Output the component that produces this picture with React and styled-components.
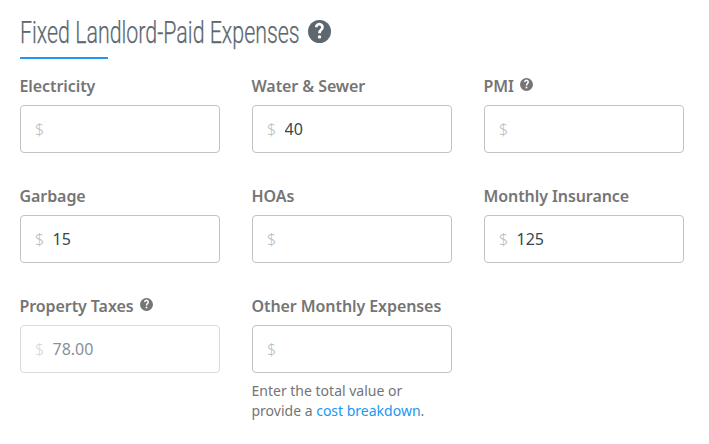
import React, { useState } from 'react';
import styled, { createGlobalStyle } from 'styled-components';

const GlobalStyle = createGlobalStyle`
  * {
    box-sizing: border-box;
  }
  body {
    margin: 0;
    background: #fff;
    font-family: 'Noto Sans', 'Open Sans', sans-serif;
    overflow: hidden;
  }
`;

const Section = styled.section`
  width: 709px;
  height: 444px;
  padding: 9px 20px 0;
`;

const Header = styled.header`
  display: flex;
  align-items: center;
  height: 48px;
  color: #5c6770;

  svg {
    flex: none;
    margin-bottom: 3px;
  }
`;

const TitleBox = styled.div`
  width: 288px;
`;

const Title = styled.h1`
  width: 279px;
  margin: 0 0 2px;
  font-family: Roboto, sans-serif;
  font-size: 32px;
  font-weight: 300;
  line-height: 46px;
  white-space: nowrap;
  transform: scaleX(0.668);
  transform-origin: left center;
  -webkit-text-stroke: 0.25px currentColor;
`;

const Underline = styled.div`
  width: 88px;
  height: 2px;
  background: #2196f3;
`;

const FieldGrid = styled.div`
  display: grid;
  grid-template-columns: repeat(3, 200px);
  column-gap: 32px;
  grid-auto-rows: 110px;
  margin-top: 15px;
`;

const Field = styled.div`
  display: flex;
  flex-direction: column;
`;

const Label = styled.label`
  display: flex;
  flex: none;
  align-items: center;
  gap: 6px;
  height: 24px;
  margin: 0 0 7px -0.5px;
  color: #757575;
  font-size: 16px;
  font-weight: 600;
  letter-spacing: -0.08px;
  white-space: nowrap;

  svg {
    margin-bottom: 3px;
  }
`;

const InputBox = styled.div`
  display: flex;
  align-items: center;
  flex: none;
  height: 48px;
  padding: 0 15px 0 14px;
  border: 1px solid #c0c4c7;
  border-radius: 4px;
  background: #fff;
  opacity: ${({ $disabled }) => ($disabled ? 0.6 : 1)};
`;

const Prefix = styled.span`
  width: 17.5px;
  color: #b8bcbf;
  font-size: 16px;
  font-weight: 300;
`;

const Input = styled.input`
  flex: 1;
  min-width: 0;
  padding: 0;
  border: none;
  outline: none;
  background: transparent;
  color: #37474f;
  font-family: inherit;
  font-size: 16px;
`;

const Hint = styled.p`
  margin: 8px 0 0 -0.5px;
  color: #757575;
  font-size: 14px;
  line-height: 20px;
`;

const HintLine = styled.span`
  display: block;
  white-space: nowrap;
`;

const Link = styled.a`
  color: #2196f3;
  text-decoration: none;
`;

const HelpIcon = ({ size }) => (
  <svg width={size} height={size} viewBox="0 0 68 68" fill="none">
    <circle cx="34" cy="34" r="34" fill="currentColor" />
    <path d="M24.5 21.5A9.2 8.8 0 1 1 39.5 28Q34 32.5 34 39" stroke="#fff" strokeWidth="8" />
    <circle cx="34" cy="50" r="5" fill="#fff" />
  </svg>
);

const fields = [
  { id: 'electricity', label: 'Electricity' },
  { id: 'water', label: 'Water & Sewer' },
  { id: 'pmi', label: 'PMI', help: true },
  { id: 'garbage', label: 'Garbage' },
  { id: 'hoas', label: 'HOAs' },
  { id: 'insurance', label: 'Monthly Insurance' },
  { id: 'taxes', label: 'Property Taxes', help: true, disabled: true },
  { id: 'other', label: 'Other Monthly Expenses', breakdown: true },
];

const App = () => {
  const [values, setValues] = useState({
    water: '40',
    garbage: '15',
    insurance: '125',
    taxes: '78.00',
  });

  const handleChange = (id) => (e) => setValues({ ...values, [id]: e.target.value });

  return (
    <>
      <GlobalStyle />
      <Section>
        <Header>
          <TitleBox>
            <Title>Fixed Landlord-Paid Expenses</Title>
          </TitleBox>
          <HelpIcon size={23} />
        </Header>
        <Underline />
        <FieldGrid>
          {fields.map(({ id, label, help, disabled, breakdown }) => (
            <Field key={id}>
              <Label htmlFor={id}>
                {label}
                {help && <HelpIcon size={13} />}
              </Label>
              <InputBox $disabled={disabled}>
                <Prefix>$</Prefix>
                <Input id={id} value={values[id] || ''} disabled={disabled} onChange={handleChange(id)} />
              </InputBox>
              {breakdown && (
                <Hint>
                  <HintLine>Enter the total value or</HintLine>
                  <HintLine>
                    provide a <Link href="#">cost breakdown</Link>.
                  </HintLine>
                </Hint>
              )}
            </Field>
          ))}
        </FieldGrid>
      </Section>
    </>
  );
};

export default App;
